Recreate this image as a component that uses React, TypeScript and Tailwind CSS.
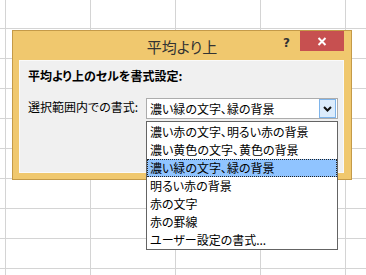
import React from "react";

const items = [
  "濃い赤の文字、明るい赤の背景",
  "濃い黄色の文字、黄色の背景",
  "濃い緑の文字、緑の背景",
  "明るい赤の背景",
  "赤の文字",
  "赤の罫線",
  "ユーザー設定の書式...",
];

export default function App() {
  const cells = Array.from({ length: 60 }, (_, i) => i);
  return (
    <div className="relative w-[366px] h-[275px] overflow-hidden bg-white font-['Noto_Sans_CJK_JP','Noto_Sans_CJK_SC',sans-serif] [font-feature-settings:'palt'] text-black">
      <div className="grid grid-cols-[6px_repeat(5,85px)] grid-rows-[29px_repeat(9,30px)]">
        {cells.map((i) => (
          <div key={i} className="border-r border-b border-[#d4d4d4]" />
        ))}
      </div>

      {/* dialog window */}
      <div className="absolute left-[12px] top-[30px] w-[340px] h-[150px] border border-[#c49a48] bg-[#f0c86e] flex flex-col">
        <div className="h-[29px] grid grid-cols-[1fr_auto_1fr] items-start">
          <div />
          <div className="text-[15px] leading-[29px] text-[#333333] pt-[1px]">平均より上</div>
          <div className="flex justify-end items-start">
            <span className="mt-[4px] mr-[10px] text-[12px] leading-[16px] font-bold text-[#333333] font-['DejaVu_Sans',sans-serif]">?</span>
            <div className="w-[44px] h-[20px] mr-[7px] bg-[#c75050] flex items-center justify-center">
              <svg width="10" height="9" viewBox="0 0 10 9">
                <path d="M1.5 1 L8.5 8 M8.5 1 L1.5 8" stroke="#ffffff" strokeWidth="2" fill="none" />
              </svg>
            </div>
          </div>
        </div>
        <div className="ml-[6px] mr-[7px] mb-[6px] flex-1 border border-[#fafafa] bg-[#f0f0f0] pl-[8px] pt-[7px] flex flex-col">
          <div className="text-[12px] leading-[16px] font-bold">平均より上のセルを書式設定:</div>
          <div className="mt-[14px] flex items-center">
            <div className="w-[118px] text-[12px] leading-[16px] pb-[3px]">選択範囲内での書式:</div>
            <div className="w-[192px] h-[21px] border border-[#acacac] bg-white flex items-center">
              <div className="flex-1 pl-[3px] text-[12px] leading-[16px]">濃い緑の文字、緑の背景</div>
              <div className="w-[17px] h-[19px] mr-[1px] border border-[#7eb4ea] bg-[#dcecfc] flex items-center justify-center">
                <svg width="9" height="6" viewBox="0 0 9 6">
                  <path d="M1 1 L4.5 4.5 L8 1" stroke="#111111" strokeWidth="2" fill="none" />
                </svg>
              </div>
            </div>
          </div>
        </div>
      </div>

      {/* dropdown list */}
      <div className="absolute left-[146px] top-[121px] w-[192px] h-[129px] border border-[#646464] bg-white pt-[1px] flex flex-col">
        {items.map((t, i) =>
          i === 2 ? (
            <div key={t} className="h-[18px] leading-[16px] pl-[2px] text-[12px] bg-[#90c4ff] border border-dotted border-[#222222]">
              {t}
            </div>
          ) : (
            <div key={t} className="h-[18px] leading-[18px] pl-[3px] text-[12px]">
              {t}
            </div>
          )
        )}
      </div>
    </div>
  );
}
